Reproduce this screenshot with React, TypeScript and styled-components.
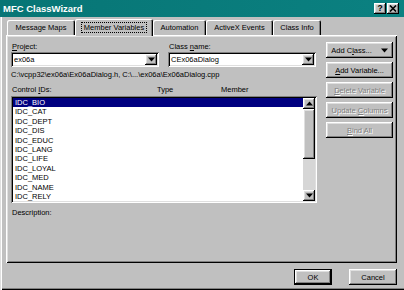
import React from "react";
import styled, { createGlobalStyle, css } from "styled-components";

const GlobalStyle = createGlobalStyle`
  html, body {
    margin: 0;
    padding: 0;
    background: #c0c0c0;
  }
  body {
    font-family: "Liberation Sans", Arial, sans-serif;
    font-size: 7.5px;
    color: #000;
  }
`;

const raised = css`
  background: #c0c0c0;
  box-shadow: inset -1px -1px #000, inset 1px 1px #fff, inset -2px -2px #808080,
    inset 2px 2px #dfdfdf;
`;

const sunken = css`
  box-shadow: inset 1px 1px #808080, inset -1px -1px #fff, inset 2px 2px #000,
    inset -2px -2px #dfdfdf;
`;

const Window = styled.div`
  width: 404px;
  height: 290px;
  display: flex;
  flex-direction: column;
  background: #c0c0c0;
  overflow: hidden;
`;

const TitleBar = styled.div`
  height: 17px;
  flex: none;
  display: flex;
  align-items: center;
  justify-content: space-between;
  padding: 0 5px 0 3px;
  background: linear-gradient(to right, #077575, #0b8181);
  color: #fff;
`;

const Title = styled.span`
  font-weight: bold;
  font-size: 9.5px;
`;

const Caps = styled.div`
  display: flex;
  gap: 1px;
`;

const CapButton = styled.div`
  ${raised};
  width: 12px;
  height: 11px;
  display: flex;
  align-items: center;
  justify-content: center;
  color: #000;
  font-weight: bold;
  font-size: 8.5px;
  line-height: 11px;
`;

const Body = styled.div`
  flex: 1;
  display: flex;
  flex-direction: column;
  padding: 1px 7px 0 6px;
  box-shadow: inset 1px 0 #dfdfdf, inset 2px 0 #fff, inset 0 -1px #000,
    inset 0 -2px #808080;
`;

const TabRow = styled.div`
  height: 17px;
  display: flex;
  align-items: flex-end;
  padding-left: 1px;
`;

const Tab = styled.div<{ $width: number; $active?: boolean }>`
  width: ${(p) => p.$width}px;
  height: ${(p) => (p.$active ? 17 : 15)}px;
  box-sizing: border-box;
  display: flex;
  align-items: center;
  justify-content: center;
  border-radius: 2px 2px 0 0;
  box-shadow: inset 1px 1px #fff, inset -1px 0 #000, inset -2px 0 #808080;
  ${(p) =>
    p.$active &&
    css`
      position: relative;
      z-index: 1;
      margin-bottom: -1px;
      background: #c0c0c0;
    `}
`;

const FocusLabel = styled.span<{ $focus?: boolean }>`
  padding: 0 2px;
  line-height: 9px;
  border: 1px dotted ${(p) => (p.$focus ? "#000" : "transparent")};
`;

const Panel = styled.div`
  height: 228px;
  box-sizing: border-box;
  padding: 7px 4px 0 5px;
  display: grid;
  grid-template-columns: 306px 67px;
  column-gap: 9px;
  align-items: start;
  box-shadow: inset 1px 1px #fff, inset -1px -1px #000, inset 2px 2px #dfdfdf,
    inset -2px -2px #808080;
`;

const LeftCol = styled.div`
  display: flex;
  flex-direction: column;
`;

const FieldRow = styled.div`
  display: grid;
  grid-template-columns: 148px 148px;
  column-gap: 9px;
`;

const Field = styled.div`
  display: flex;
  flex-direction: column;
`;

const Label = styled.div<{ $gap?: number }>`
  height: 10px;
  line-height: 10px;
  padding-left: 1px;
  margin-top: ${(p) => p.$gap ?? 0}px;
`;

const Combo = styled.div`
  ${sunken};
  height: 15px;
  background: #fff;
  display: flex;
  align-items: center;
  justify-content: space-between;
  padding: 2px 2px 2px 3px;
  box-sizing: border-box;
`;

const ComboButton = styled.div`
  ${raised};
  width: 12px;
  height: 11px;
  display: flex;
  align-items: center;
  justify-content: center;
`;

const PathText = styled.div`
  margin-top: 3px;
  height: 10px;
  line-height: 10px;
`;

const HeaderRow = styled.div`
  margin-top: 5px;
  height: 10px;
  line-height: 10px;
  display: grid;
  grid-template-columns: 145px 64px 1fr;
  padding-left: 1px;
`;

const ListBox = styled.div`
  ${sunken};
  margin-top: 1px;
  height: 107px;
  background: #fff;
  box-sizing: border-box;
  padding: 2px;
  display: flex;
  overflow: hidden;
`;

const Rows = styled.div`
  flex: 1;
  overflow: hidden;
`;

const Row = styled.div<{ $selected?: boolean }>`
  height: 9.4px;
  line-height: 9.4px;
  padding-left: 2px;
  white-space: nowrap;
  ${(p) =>
    p.$selected &&
    css`
      background: #000080;
      color: #fff;
    `}
`;

const ScrollBar = styled.div`
  width: 12px;
  display: flex;
  flex-direction: column;
`;

const ScrollArrow = styled.div`
  ${raised};
  height: 11px;
  display: flex;
  align-items: center;
  justify-content: center;
`;

const Thumb = styled.div`
  ${raised};
  height: 50px;
`;

const Track = styled.div`
  flex: 1;
  background: #d6d6d6;
`;

const ButtonCol = styled.div`
  display: flex;
  flex-direction: column;
  gap: 4px;
`;

const Button = styled.div<{ $disabled?: boolean; $default?: boolean; $width?: number }>`
  ${raised};
  height: 16px;
  width: ${(p) => (p.$width ? `${p.$width}px` : "auto")};
  box-sizing: border-box;
  display: flex;
  align-items: center;
  justify-content: center;
  gap: 9px;
  white-space: nowrap;
  ${(p) =>
    p.$disabled &&
    css`
      color: #808080;
      text-shadow: 1px 1px 0 #fff;
    `}
  ${(p) =>
    p.$default &&
    css`
      box-shadow: inset 0 0 0 1px #000, inset -2px -2px #000, inset 2px 2px #fff,
        inset -3px -3px #808080, inset 3px 3px #dfdfdf;
    `}
`;

const Footer = styled.div`
  display: flex;
  justify-content: flex-end;
  gap: 17px;
  padding-top: 6px;
`;

const DownArrow = ({ size = 5 }: { size?: number }) => (
  <svg width={size + 2} height={size} viewBox="0 0 7 4">
    <polygon points="0,0 7,0 3.5,4" fill="#000" />
  </svg>
);

const UpArrow = () => (
  <svg width={7} height={5} viewBox="0 0 7 4">
    <polygon points="0,4 7,4 3.5,0" fill="#000" />
  </svg>
);

const CloseIcon = () => (
  <svg width="8" height="7" viewBox="0 0 8 7">
    <path d="M1 0.5 L7 6.5 M7 0.5 L1 6.5" stroke="#000" strokeWidth="1.6" />
  </svg>
);

const tabs = [
  { name: "Message Maps", width: 68 },
  { name: "Member Variables", width: 78, active: true },
  { name: "Automation", width: 53 },
  { name: "ActiveX Events", width: 67 },
  { name: "Class Info", width: 48 },
];

const controls = [
  "IDC_BIO",
  "IDC_CAT",
  "IDC_DEPT",
  "IDC_DIS",
  "IDC_EDUC",
  "IDC_LANG",
  "IDC_LIFE",
  "IDC_LOYAL",
  "IDC_MED",
  "IDC_NAME",
  "IDC_RELY",
];

export default function App() {
  return (
    <>
      <GlobalStyle />
      <Window>
        <TitleBar>
          <Title>MFC ClassWizard</Title>
          <Caps>
            <CapButton>?</CapButton>
            <CapButton>
              <CloseIcon />
            </CapButton>
          </Caps>
        </TitleBar>
        <Body>
          <TabRow>
            {tabs.map((t) => (
              <Tab key={t.name} $width={t.width} $active={t.active}>
                <FocusLabel $focus={t.active}>{t.name}</FocusLabel>
              </Tab>
            ))}
          </TabRow>
          <Panel>
            <LeftCol>
              <FieldRow>
                <Field>
                  <Label>
                    <u>P</u>roject:
                  </Label>
                  <Combo>
                    <span>ex06a</span>
                    <ComboButton>
                      <DownArrow />
                    </ComboButton>
                  </Combo>
                </Field>
                <Field>
                  <Label>
                    Class <u>n</u>ame:
                  </Label>
                  <Combo>
                    <span>CEx06aDialog</span>
                    <ComboButton>
                      <DownArrow />
                    </ComboButton>
                  </Combo>
                </Field>
              </FieldRow>
              <PathText>C:\vcpp32\ex06a\Ex06aDialog.h, C:\...\ex06a\Ex06aDialog.cpp</PathText>
              <HeaderRow>
                <span>
                  Control <u>I</u>Ds:
                </span>
                <span>Type</span>
                <span>Member</span>
              </HeaderRow>
              <ListBox>
                <Rows>
                  {controls.map((c, i) => (
                    <Row key={c} $selected={i === 0}>
                      {c}
                    </Row>
                  ))}
                </Rows>
                <ScrollBar>
                  <ScrollArrow>
                    <UpArrow />
                  </ScrollArrow>
                  <Thumb />
                  <Track />
                  <ScrollArrow>
                    <DownArrow />
                  </ScrollArrow>
                </ScrollBar>
              </ListBox>
              <Label $gap={5}>Description:</Label>
            </LeftCol>
            <ButtonCol>
              <Button>
                <span>
                  Add C<u>l</u>ass...
                </span>
                <DownArrow />
              </Button>
              <Button>
                <span>
                  <u>A</u>dd Variable...
                </span>
              </Button>
              <Button $disabled>
                <span>
                  <u>D</u>elete Variable
                </span>
              </Button>
              <Button $disabled>
                <span>
                  Update <u>C</u>olumns
                </span>
              </Button>
              <Button $disabled>
                <span>
                  <u>B</u>ind All
                </span>
              </Button>
            </ButtonCol>
          </Panel>
          <Footer>
            <Button $default $width={38}>
              OK
            </Button>
            <Button $width={48}>Cancel</Button>
          </Footer>
        </Body>
      </Window>
    </>
  );
}
